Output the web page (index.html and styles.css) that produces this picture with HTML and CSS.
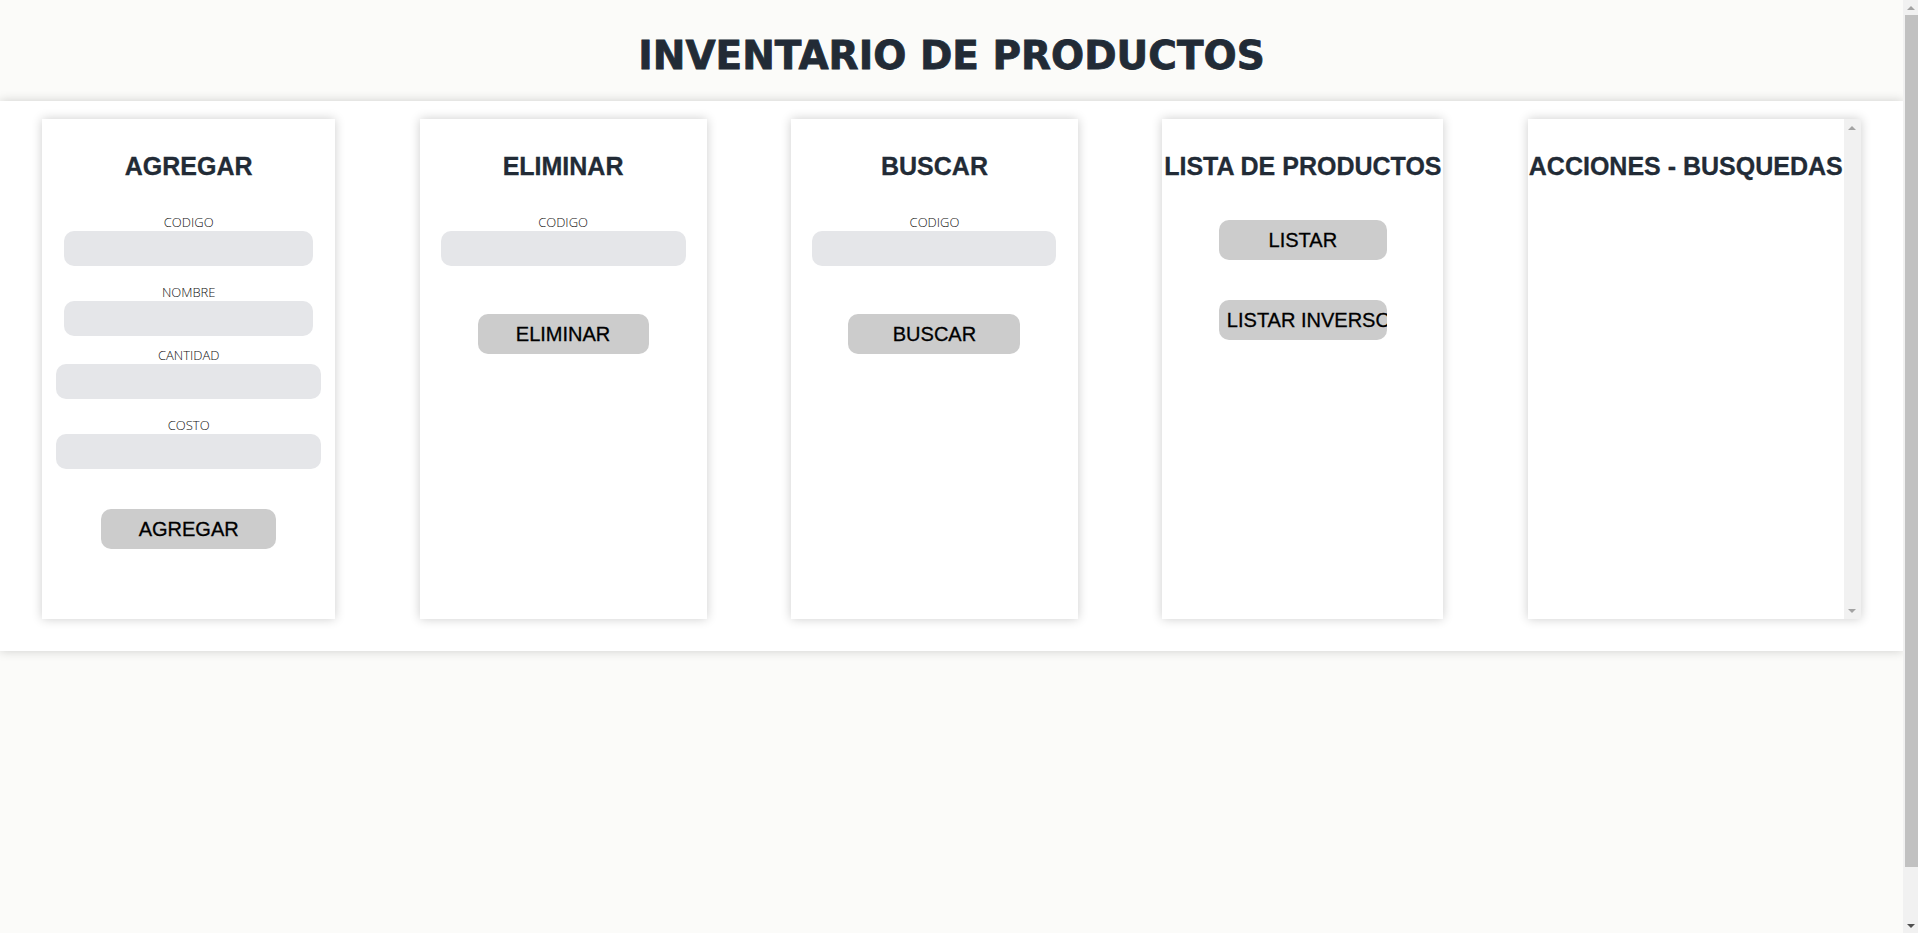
FILE: index.html
```html
<!DOCTYPE html>
<html lang="es">
<head>
    <meta charset="UTF-8">
    <meta name="viewport" content="width=device-width, initial-scale=1.0">
    <title>Inventario de Productos</title>
    <link rel="stylesheet" href="styles.css">
</head>
<body>
    <div class="page">
        <header class="header">
            <h1>INVENTARIO DE PRODUCTOS</h1>
        </header>

        <main class="panel">
            <div class="card card-agregar">
                <h2>AGREGAR</h2>
                <div class="field">
                    <label for="codigo">CODIGO</label>
                    <input type="text" id="codigo">
                </div>
                <div class="field field-tight">
                    <label for="nombre">NOMBRE</label>
                    <input type="text" id="nombre">
                </div>
                <div class="field">
                    <label for="cantidad">CANTIDAD</label>
                    <input type="number" id="cantidad" class="wide">
                </div>
                <div class="field">
                    <label for="costo">COSTO</label>
                    <input type="number" id="costo" class="wide">
                </div>
                <button class="btn btn-agregar">AGREGAR</button>
            </div>

            <div class="card card-eliminar">
                <h2>ELIMINAR</h2>
                <div class="field">
                    <label for="codigoEliminar">CODIGO</label>
                    <input type="text" id="codigoEliminar">
                </div>
                <button class="btn btn-eliminar">ELIMINAR</button>
            </div>

            <div class="card card-buscar">
                <h2>BUSCAR</h2>
                <div class="field">
                    <label for="codigoBuscar">CODIGO</label>
                    <input type="text" id="codigoBuscar">
                </div>
                <button class="btn btn-buscar">BUSCAR</button>
            </div>

            <div class="card card-lista">
                <h2>LISTA DE PRODUCTOS</h2>
                <button class="btn btn-listar">LISTAR</button>
                <button class="btn btn-listar">LISTAR INVERSO</button>
            </div>

            <div class="card card-acciones">
                <div class="acciones-body">
                    <h2>ACCIONES - BUSQUEDAS</h2>
                    <div id="log"></div>
                </div>
                <div class="scrollbar scrollbar-card">
                    <span class="arrow arrow-up"></span>
                    <span class="arrow arrow-down"></span>
                </div>
            </div>
        </main>
    </div>

    <div class="scrollbar scrollbar-page">
        <span class="arrow arrow-up"></span>
        <div class="thumb"></div>
        <span class="arrow arrow-down arrow-dark"></span>
    </div>
</body>
</html>
```

FILE: styles.css
```css
body {
    margin: 0;
    height: 100vh;
    overflow: hidden;
    display: flex;
    background: #fbfbf9;
    font-family: "Liberation Sans", Arial, sans-serif;
    color: #222b36;
}
.page {
    flex: 1;
    min-width: 0;
}
.header {
    height: 92px;
    padding-top: 9px;
    display: flex;
    align-items: center;
    justify-content: center;
}
.header h1 {
    margin: 0;
    font-family: "DejaVu Sans", sans-serif;
    font-size: 39px;
    font-weight: bold;
    -webkit-text-stroke: 0.8px #222b36;
    color: #222b36;
}
.panel {
    background: white;
    box-shadow: 0 0 10px rgba(0,0,0,0.18);
    padding: 18px 0 32px;
    display: flex;
    justify-content: space-around;
    align-items: flex-start;
}
.card {
    height: 500px;
    background: white;
    box-shadow: 0 0 10px rgba(0,0,0,0.2);
    display: flex;
    flex-direction: column;
    align-items: center;
    text-align: center;
    box-sizing: border-box;
}
.card h2 {
    margin: 33px 0 32px;
    font-size: 25px;
    font-weight: bold;
    -webkit-text-stroke: 0.3px #222b36;
    white-space: nowrap;
}
.card-agregar { width: 293px; }
.card-eliminar { width: 287px; }
.card-buscar { width: 287px; }
.card-lista { width: 281px; }
.card-lista h2 {
    margin-bottom: 39px;
}
.card-acciones {
    width: 333px;
    flex-direction: row;
    align-items: stretch;
}
.acciones-body {
    flex: 1;
    min-width: 0;
}

/* scrollbars drawn by hand */
.scrollbar {
    background: #f1f1f1;
    display: flex;
    flex-direction: column;
    justify-content: space-between;
}
.scrollbar-page {
    width: 15px;
    height: 100vh;
}
.scrollbar-card {
    width: 17px;
}
.thumb {
    height: 852px;
    margin-left: 2px;
    background: #c1c1c1;
}
.arrow {
    height: 15px;
    display: flex;
    align-items: center;
    justify-content: center;
}
.scrollbar-card .arrow {
    height: 17px;
}
.arrow::before {
    content: "";
    border-left: 4px solid transparent;
    border-right: 4px solid transparent;
}
.arrow-up::before {
    border-bottom: 4px solid #a3a3a3;
}
.arrow-down::before {
    border-top: 4px solid #a3a3a3;
}
.arrow-dark::before {
    border-top-color: #505050;
}
.scrollbar-page .arrow-down {
    margin-top: auto;
}

.field {
    display: flex;
    flex-direction: column;
    align-items: center;
    margin-bottom: 17px;
}
.field-tight {
    margin-bottom: 10px;
}
label {
    display: block;
    font-family: "Open Sans", sans-serif;
    font-weight: 300;
    font-size: 13px;
    color: #111;
}
input {
    width: 249px;
    height: 35px;
    border: none;
    border-radius: 10px;
    background: #e5e6e9;
    box-sizing: border-box;
    padding: 0 10px;
    font-size: 15px;
}
input.wide {
    width: 265px;
}
.card-eliminar input { width: 245px; }
.card-buscar input { width: 244px; }
.btn {
    height: 40px;
    border: none;
    border-radius: 10px;
    background: #cccccc;
    color: #000;
    font-family: "Liberation Sans", Arial, sans-serif;
    font-size: 20px;
    -webkit-text-stroke: 0.3px #000;
    padding: 0 8px;
    white-space: nowrap;
    overflow: hidden;
    cursor: pointer;
}
.btn-agregar {
    width: 175px;
    margin-top: 23px;
}
.btn-eliminar {
    width: 171px;
    margin-top: 31px;
}
.btn-buscar {
    width: 172px;
    margin-top: 31px;
}
.btn-listar {
    width: 168px;
    margin-bottom: 40px;
}
```
